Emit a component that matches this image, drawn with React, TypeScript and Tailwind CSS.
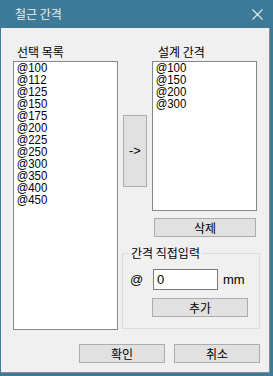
import React from "react";

const KR = { fontFamily: '"Noto Sans CJK KR", "Noto Sans", sans-serif' } as const;
const LAT = { fontFamily: '"Liberation Sans", Arial, sans-serif' } as const;

const left = ["@100", "@112", "@125", "@150", "@175", "@200", "@225", "@250", "@300", "@350", "@400", "@450"];
const right = ["@100", "@150", "@200", "@300"];

function Btn({ children, className }: { children: React.ReactNode; className: string }) {
  return (
    <div
      className={
        "flex items-center justify-center bg-[#e1e1e1] border border-[#adadad] text-[12px] leading-[14px] text-black " +
        className
      }
      style={KR}
    >
      {children}
    </div>
  );
}

function List({ items, className }: { items: string[]; className: string }) {
  return (
    <div className={"bg-white border border-[#828790] overflow-hidden " + className}>
      <div className="origin-top-left scale-x-[0.88] pl-[3px] pt-0 text-[13px] leading-[12px] text-black" style={LAT}>
        {items.map((t) => (
          <div key={t} className="h-[12px] whitespace-nowrap">
            {t}
          </div>
        ))}
      </div>
    </div>
  );
}

export default function App() {
  return (
    <div className="w-[273px] h-[376px] bg-[#3c7a98] flex flex-col overflow-hidden">
      <div className="h-[28px] flex items-center pl-[15px] pr-[10px] shrink-0">
        <span className="text-[12px] leading-[14px] text-[#e8eef1]" style={KR}>
          철근 간격
        </span>
        <svg className="ml-auto" width="11" height="11" viewBox="0 0 11 11">
          <path d="M0.5 0.5 L10.5 10.5 M10.5 0.5 L0.5 10.5" stroke="#e4e9ec" strokeWidth="1.1" fill="none" />
        </svg>
      </div>
      <div className="flex-1 ml-[1px] mr-[3px] mb-[3px] bg-[#f0f0f0] border-r border-b border-[#8a8a8a] pl-[12px] pt-[17px]">
        <div className="flex items-start">
          <div className="w-[105px] flex flex-col">
            <div className="h-[14px] leading-[14px] text-[12px] pl-[4px] text-black" style={KR}>
              선택 목록
            </div>
            <List items={left} className="mt-[2px] h-[269px]" />
          </div>
          <div className="ml-[4px] w-[138px] flex flex-col">
            <div className="flex items-start">
              <Btn className="ml-[1px] mt-[70px] w-[24px] h-[72px]">
                <span className="text-[13px]" style={LAT}>
                  -&gt;
                </span>
              </Btn>
              <div className="ml-[5px] w-[105px] flex flex-col">
                <div className="h-[14px] leading-[14px] text-[12px] pl-[6px] text-black" style={KR}>
                  설계 간격
                </div>
                <List items={right} className="mt-[2px] h-[150px]" />
                <Btn className="mt-[7px] ml-[2px] w-[102px] h-[19px]">삭제</Btn>
              </div>
            </div>
            <div className="mt-[16px] h-[76px] w-[138px] border border-[#dcdcdc] relative pt-[15px]">
              <div
                className="absolute -top-[8px] left-[6px] px-[2px] bg-[#f0f0f0] text-[12px] leading-[14px] text-black"
                style={KR}
              >
                간격 직접입력
              </div>
              <div className="flex items-center h-[21px] pl-[7px]">
                <span className="w-[23px] text-[13px] text-black" style={LAT}>
                  @
                </span>
                <div className="w-[65px] h-[21px] bg-white border border-[#7a7a7a] flex items-center pl-[3px] text-[13px] text-black" style={LAT}>
                  0
                </div>
                <span className="ml-[5px] text-[13px] text-black" style={LAT}>
                  mm
                </span>
              </div>
              <Btn className="mt-[8px] ml-[29px] w-[96px] h-[19px]">추가</Btn>
            </div>
          </div>
        </div>
        <div className="mt-[14px] flex justify-end gap-[9px] pr-[9px]">
          <Btn className="w-[86px] h-[19px]">확인</Btn>
          <Btn className="w-[86px] h-[19px]">취소</Btn>
        </div>
      </div>
    </div>
  );
}
